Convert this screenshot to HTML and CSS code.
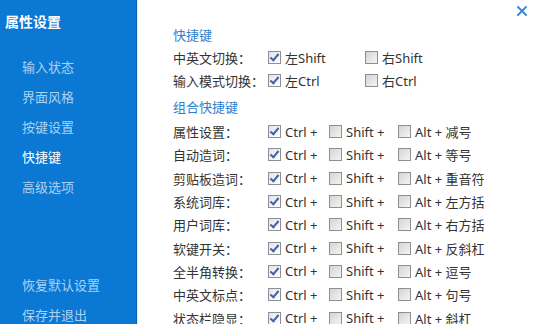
FILE: index.html
```html
<!DOCTYPE html>
<html lang="zh-CN">
<head>
    <meta charset="UTF-8">
    <title>属性设置</title>
    <link rel="stylesheet" href="styles.css">
</head>
<body>
    <div class="window">
        <div class="sidebar">
            <div class="title">属性设置</div>
            <div class="menu">
                <div class="menu-item">输入状态</div>
                <div class="menu-item">界面风格</div>
                <div class="menu-item">按键设置</div>
                <div class="menu-item active">快捷键</div>
                <div class="menu-item">高级选项</div>
            </div>
            <div class="menu bottom">
                <div class="menu-item">恢复默认设置</div>
                <div class="menu-item">保存并退出</div>
            </div>
        </div>

        <div class="main">
            <svg class="close" width="12" height="12" viewBox="0 0 12 12">
                <path d="M2 2 L10 10 M10 2 L2 10" stroke="#3a88d6" stroke-width="2" stroke-linecap="round"/>
            </svg>

            <div class="section-title first">快捷键</div>
            <div class="row">
                <span class="label">中英文切换<span class="colon">：</span></span>
                <span class="opt wide"><span class="cb on"></span>左Shift</span>
                <span class="opt"><span class="cb"></span>右Shift</span>
            </div>
            <div class="row">
                <span class="label">输入模式切换<span class="colon">：</span></span>
                <span class="opt wide"><span class="cb on"></span>左Ctrl</span>
                <span class="opt"><span class="cb"></span>右Ctrl</span>
            </div>

            <div class="section-title">组合快捷键</div>
            <div id="combos"></div>
        </div>
    </div>

    <script>
        const combos = [
            '属性设置', '自动造词', '剪贴板造词', '系统词库', '用户词库',
            '软键开关', '全半角转换', '中英文标点', '状态栏隐显'
        ];
        const keys = ['减号', '等号', '重音符', '左方括', '右方括', '反斜杠', '逗号', '句号', '斜杠'];
        const box = document.getElementById('combos');

        combos.forEach((name, i) => {
            const row = document.createElement('div');
            row.className = 'row combo';
            row.innerHTML =
                `<span class="label">${name}<span class="colon">：</span></span>` +
                `<span class="opt ctrl"><span class="cb on"></span>Ctrl +</span>` +
                `<span class="opt shift"><span class="cb"></span>Shift +</span>` +
                `<span class="opt"><span class="cb"></span>Alt + ${keys[i]}</span>`;
            box.appendChild(row);
        });
    </script>
</body>
</html>
```

FILE: styles.css
```css
body {
    margin: 0;
    width: 540px;
    height: 324px;
    overflow: hidden;
    background-color: #ffffff;
    font-family: 'Noto Sans', 'Noto Sans CJK SC', sans-serif;
    font-size: 13px;
}

.window {
    display: flex;
    height: 324px;
}

.sidebar {
    width: 137px;
    flex-shrink: 0;
    background-color: #0b78d4;
    border-right: 1px solid #0a62b0;
    box-shadow: 1px 0 0 #d4ecfa;
    display: flex;
    flex-direction: column;
    padding-top: 12px;
    box-sizing: border-box;
}

.title {
    color: #ffffff;
    font-size: 14px;
    font-weight: bold;
    line-height: 20px;
    padding-left: 5px;
    margin-bottom: 20px;
}

.menu-item {
    color: #a9d2f2;
    line-height: 30px;
    padding-left: 22px;
}

.menu-item.active {
    color: #ffffff;
}

.menu.bottom {
    margin-top: auto;
    margin-bottom: -6px;
}

.main {
    flex: 1;
    position: relative;
    padding-left: 36px;
    padding-top: 24px;
    color: #333333;
}

.close {
    position: absolute;
    top: 5px;
    right: 12px;
}

.section-title {
    color: #2f7fcf;
    line-height: 22px;
    margin-top: 4px;
    margin-bottom: 2px;
}

.section-title.first {
    margin-top: 0;
    margin-bottom: 0;
}

.row {
    display: flex;
    align-items: center;
    height: 23px;
}

.row.combo {
    height: 23.3px;
}

.label {
    width: 95px;
    flex-shrink: 0;
    white-space: nowrap;
}

.colon {
    font-family: 'Noto Sans CJK TC', sans-serif;
}

.opt {
    display: flex;
    align-items: center;
    white-space: nowrap;
}

.opt.wide {
    width: 97px;
}

.opt.ctrl {
    width: 61px;
}

.opt.shift {
    width: 69px;
}

.cb {
    width: 11px;
    height: 11px;
    border: 1px solid #8e8f8f;
    background: linear-gradient(135deg, #d4d4d4, #f4f4f4);
    margin-right: 4px;
    position: relative;
    flex-shrink: 0;
}

.cb.on {
    background: linear-gradient(135deg, #dfe4f2, #ffffff);
}

.cb.on::after {
    content: '';
    position: absolute;
    left: 3px;
    top: 0px;
    width: 3px;
    height: 7px;
    border-right: 2px solid #4560a6;
    border-bottom: 2px solid #4560a6;
    transform: rotate(40deg);
}
```
